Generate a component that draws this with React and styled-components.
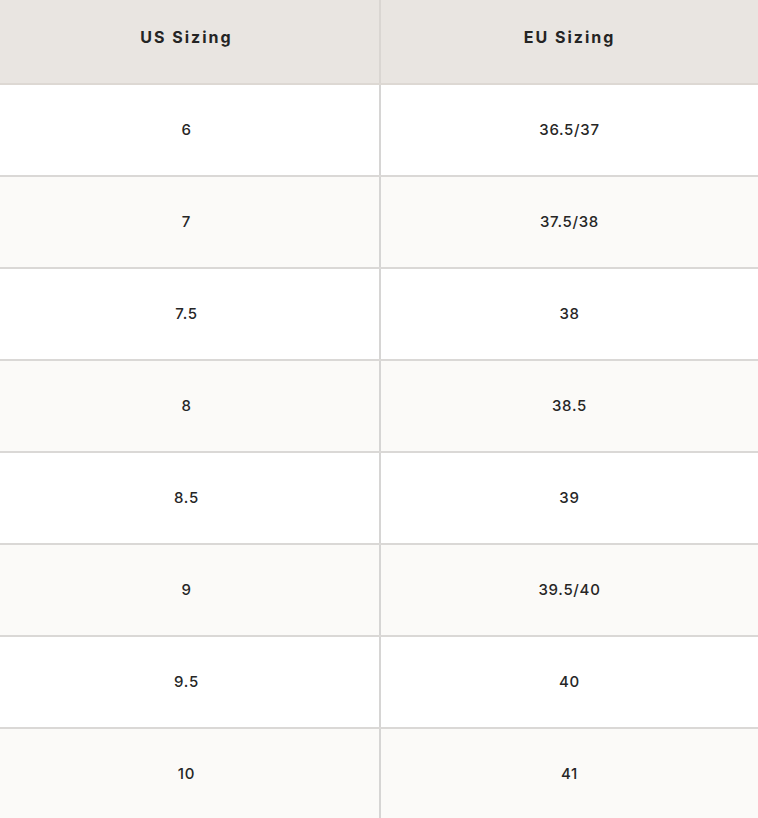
import React from "react";
import styled, { createGlobalStyle } from "styled-components";

const GlobalStyle = createGlobalStyle`
	html, body {
		margin: 0;
		padding: 0;
		background: #ffffff;
	}
	body {
		font-family: Inter, "Liberation Sans", sans-serif;
		color: #222;
	}
`;

const SIZES = [
	["6", "36.5/37"],
	["7", "37.5/38"],
	["7.5", "38"],
	["8", "38.5"],
	["8.5", "39"],
	["9", "39.5/40"],
	["9.5", "40"],
	["10", "41"],
];

const Chart = styled.div`
	width: 758px;
	display: flex;
	flex-direction: column;
`;

const HeadRow = styled.div`
	display: grid;
	grid-template-columns: 379px 1fr;
	height: 83px;
	background: #e9e5e1;
	border-bottom: 2px solid #ddd8d3;
`;

const HeadCell = styled.div`
	display: flex;
	align-items: center;
	justify-content: center;
	padding-bottom: 9px;
	padding-right: ${(p) => (p.$divider ? "0" : "6px")};
	border-left: ${(p) => (p.$divider ? "2px solid #dad6d2" : "none")};
	font-size: 16px;
	font-weight: 700;
	letter-spacing: 2px;
	color: #242424;
`;

const Row = styled.div`
	display: grid;
	grid-template-columns: 379px 1fr;
	height: 90px;
	background: ${(p) => (p.$alt ? "#fbfaf8" : "#ffffff")};
	border-bottom: 2px solid #dad8d6;
`;

const Cell = styled.div`
	display: flex;
	align-items: center;
	justify-content: center;
	padding-right: ${(p) => (p.$divider ? "0" : "6px")};
	border-left: ${(p) => (p.$divider ? "2px solid #d6d5d4" : "none")};
	font-size: 15px;
	font-weight: 500;
	letter-spacing: 0.7px;
	color: #262626;
	padding-bottom: 2px;
`;

export default function App() {
	return (
		<>
			<GlobalStyle />
			<Chart>
				<HeadRow>
					<HeadCell>US Sizing</HeadCell>
					<HeadCell $divider>EU Sizing</HeadCell>
				</HeadRow>
				{SIZES.map(([us, eu], i) => (
					<Row key={us} $alt={i % 2 === 1}>
						<Cell>{us}</Cell>
						<Cell $divider>{eu}</Cell>
					</Row>
				))}
			</Chart>
		</>
	);
}
